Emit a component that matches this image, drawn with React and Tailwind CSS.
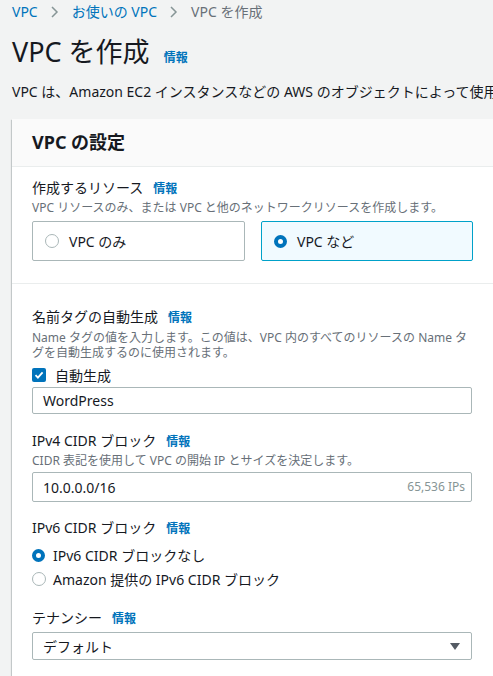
import React from 'react';

const Info = ({ className = '' }) => (
  <span className={`text-[12px] font-bold text-[#0073bb] ${className}`}>情報</span>
);

const Chevron = () => (
  <svg width="10" height="12" viewBox="0 0 10 12" className="mx-[12px]">
    <path d="M2 1l5 5-5 5" fill="none" stroke="#879596" strokeWidth="1.5" />
  </svg>
);

const Radio = ({ checked }) =>
  checked ? (
    <span className="inline-block w-[13px] h-[13px] rounded-full border-[4px] border-[#0073bb] bg-white shrink-0" />
  ) : (
    <span className="inline-block w-[14px] h-[14px] rounded-full border-[1.5px] border-[#aab7b8] bg-white shrink-0" />
  );

const Label = ({ children, className = '' }) => (
  <div className={`flex items-baseline text-[14px] leading-5 text-[#16191f] ${className}`}>
    <span>{children}</span>
    <Info className="ml-[10px]" />
  </div>
);

const Desc = ({ children, className = '' }) => (
  <div className={`text-[12px] leading-4 text-[#687078] whitespace-nowrap ${className}`}>{children}</div>
);

export default function App() {
  return (
    <div
      className="w-full h-[676px] overflow-hidden bg-[#f2f3f3] pl-3 text-[#16191f]"
      style={{ fontFamily: '"Noto Sans", "Noto Sans CJK JP", sans-serif' }}
    >
      {/* breadcrumb */}
      <div className="flex items-center pt-[3px] text-[14px] leading-[18px] whitespace-nowrap">
        <span className="text-[#0073bb]">VPC</span>
        <Chevron />
        <span className="text-[#0073bb]">お使いの VPC</span>
        <Chevron />
        <span className="text-[#687078]">VPC を作成</span>
      </div>

      <div className="flex items-baseline mt-[15px]">
        <h1 className="text-[27px] leading-8 font-normal">VPC を作成</h1>
        <Info className="ml-[14px]" />
      </div>

      <p className="mt-[14px] text-[14px] leading-5 whitespace-nowrap">
        VPC は、Amazon EC2 インスタンスなどの AWS のオブジェクトによって使用される仮想ネットワークです。
      </p>

      <div className="mt-[17px] w-[560px] bg-white shadow-[0_1px_1px_0_rgba(0,28,36,0.3),-1px_1px_1px_0_rgba(0,28,36,0.15)]">
        <div className="h-[48px] flex items-center px-5 bg-[#fafafa] border-b border-[#eaeded]">
          <h2 className="text-[18px] font-bold leading-6 -mt-[2px]">VPC の設定</h2>
        </div>

        <div className="px-5 pt-[11px] pb-[22px]">
          <Label>作成するリソース</Label>
          <Desc className="mt-[1px]">VPC リソースのみ、または VPC と他のネットワークリソースを作成します。</Desc>
          <div className="flex gap-4 mt-[5px]">
            <div className="w-[213px] h-[40px] flex items-center pl-3 gap-[10px] border border-[#aab7b8] rounded-[2px] text-[14px]">
              <Radio />
              <span>VPC のみ</span>
            </div>
            <div className="w-[212px] h-[40px] flex items-center pl-3 gap-[10px] border border-[#00a1c9] bg-[#f1faff] rounded-[2px] text-[14px]">
              <Radio checked />
              <span>VPC など</span>
            </div>
          </div>
        </div>

        <div className="border-t border-[#eaeded] px-5 pt-[23px] pb-10">
          <Label>名前タグの自動生成</Label>
          <div className="mt-[2px] text-[12px] leading-[15px] text-[#687078] whitespace-nowrap">
            <div>Name タグの値を入力します。この値は、VPC 内のすべてのリソースの Name タ</div>
            <div>グを自動生成するのに使用されます。</div>
          </div>
          <div className="flex items-center gap-[9px] mt-[5px] h-5">
            <span className="w-[14px] h-[14px] rounded-[2px] bg-[#0073bb] flex items-center justify-center">
              <svg width="10" height="10" viewBox="0 0 10 10">
                <path d="M1.5 5.2l2.4 2.4L8.6 2.4" fill="none" stroke="white" strokeWidth="1.8" />
              </svg>
            </span>
            <span className="text-[14px]">自動生成</span>
          </div>
          <div className="mt-[2px] w-[440px] h-[27px] flex items-center px-[10px] border border-[#aab7b8] rounded-[2px] text-[14px]">
            WordPress
          </div>

          <Label className="mt-[17px]">IPv4 CIDR ブロック</Label>
          <Desc className="mt-[1px]">CIDR 表記を使用して VPC の開始 IP とサイズを決定します。</Desc>
          <div className="mt-[3px] w-[440px] h-[30px] flex items-center justify-between pl-[10px] pr-[6px] border border-[#aab7b8] rounded-[2px]">
            <span className="text-[14px]">10.0.0.0/16</span>
            <span className="text-[12px] text-[#879596]">65,536 IPs</span>
          </div>

          <Label className="mt-[16px]">IPv6 CIDR ブロック</Label>
          <div className="mt-[4px] h-6 flex items-center gap-[8px] text-[14px]">
            <Radio checked />
            <span>IPv6 CIDR ブロックなし</span>
          </div>
          <div className="h-6 flex items-center gap-[7px] text-[14px]">
            <Radio />
            <span>Amazon 提供の IPv6 CIDR ブロック</span>
          </div>

          <Label className="mt-[17px]">テナンシー</Label>
          <div className="mt-[3px] w-[440px] h-[28px] flex items-center justify-between pl-[10px] pr-[11px] border border-[#aab7b8] rounded-[2px]">
            <span className="text-[14px]">デフォルト</span>
            <svg width="10" height="7" viewBox="0 0 10 7">
              <path d="M0 0h10L5 7z" fill="#545b64" />
            </svg>
          </div>
        </div>
      </div>
    </div>
  );
}
